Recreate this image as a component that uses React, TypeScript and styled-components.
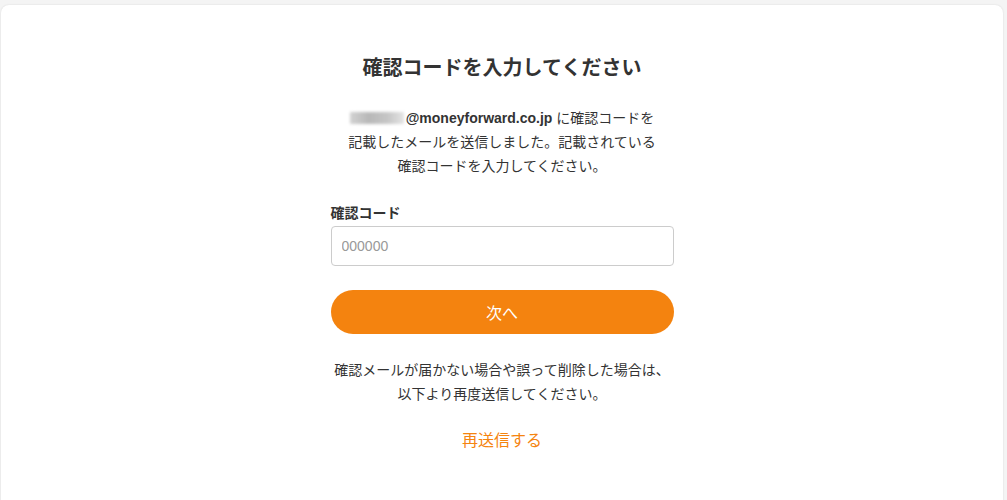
import React from "react";
import styled, { createGlobalStyle } from "styled-components";

const Global = createGlobalStyle`
  html, body { margin: 0; padding: 0; background: #f4f4f4; }
  body { font-family: "Liberation Sans", "Noto Sans CJK JP", sans-serif; color: #333; }
  * { box-sizing: border-box; }
`;

const Page = styled.div`
  padding: 5px 4px 0 1px;
  height: 500px;
  overflow: hidden;
`;

const Card = styled.main`
  background: #fff;
  border-radius: 8px;
  box-shadow: 0 0 2px rgba(0, 0, 0, 0.12);
  min-height: 520px;
  display: flex;
  flex-direction: column;
  align-items: center;
  padding-top: 48px;
`;

const Column = styled.div`
  width: 343px;
  display: flex;
  flex-direction: column;
  align-items: stretch;
`;

const Title = styled.h1`
  margin: 0;
  font-size: 20px;
  line-height: 30px;
  font-weight: 700;
  text-align: center;
  color: #333;
  white-space: nowrap;
`;

const Text = styled.p<{ $top: number }>`
  margin: ${(p) => p.$top}px -20px 0;
  font-size: 14px;
  line-height: 24px;
  text-align: center;
  color: #333;
  white-space: nowrap;
`;

const Email = styled.strong`
  font-weight: 700;
`;

const Blurred = styled.span`
  display: inline-block;
  width: 54px;
  height: 12px;
  margin-right: 2px;
  vertical-align: -1px;
  background: linear-gradient(90deg, #d2d2d2 0%, #b8b8b8 35%, #c6c6c6 70%, #e4e4e4 100%);
  filter: blur(1.5px);
`;

const Label = styled.label`
  margin-top: 26px;
  font-size: 14px;
  line-height: 18px;
  font-weight: 700;
  color: #333;
`;

const Input = styled.input`
  margin-top: 4px;
  height: 40px;
  width: 100%;
  border: 1px solid #cccccc;
  border-radius: 4px;
  padding: 0 10px;
  font-size: 14px;
  font-family: "Liberation Sans", "Noto Sans CJK JP", sans-serif;
  color: #333;
  outline: none;
  &::placeholder { color: #999; }
`;

const Button = styled.button`
  margin-top: 24px;
  height: 44px;
  width: 100%;
  border: none;
  border-radius: 22px;
  background: #f4830f;
  color: #fff;
  font-size: 16px;
  font-family: "Liberation Sans", "Noto Sans CJK JP", sans-serif;
  cursor: pointer;
`;

const Resend = styled.a`
  margin-top: 23px;
  font-size: 16px;
  line-height: 24px;
  text-align: center;
  color: #f5840f;
  text-decoration: none;
  cursor: pointer;
`;

export default function App() {
  return (
    <>
      <Global />
      <Page>
        <Card>
          <Column>
            <Title>確認コードを入力してください</Title>
            <Text $top={23}>
              <Blurred />
              <Email>@moneyforward.co.jp</Email> に確認コードを
              <br />
              記載したメールを送信しました。記載されている
              <br />
              確認コードを入力してください。
            </Text>
            <Label htmlFor="code">確認コード</Label>
            <Input id="code" placeholder="000000" />
            <Button type="button">次へ</Button>
            <Text $top={24}>
              確認メールが届かない場合や誤って削除した場合は、
              <br />
              以下より再度送信してください。
            </Text>
            <Resend>再送信する</Resend>
          </Column>
        </Card>
      </Page>
    </>
  );
}
